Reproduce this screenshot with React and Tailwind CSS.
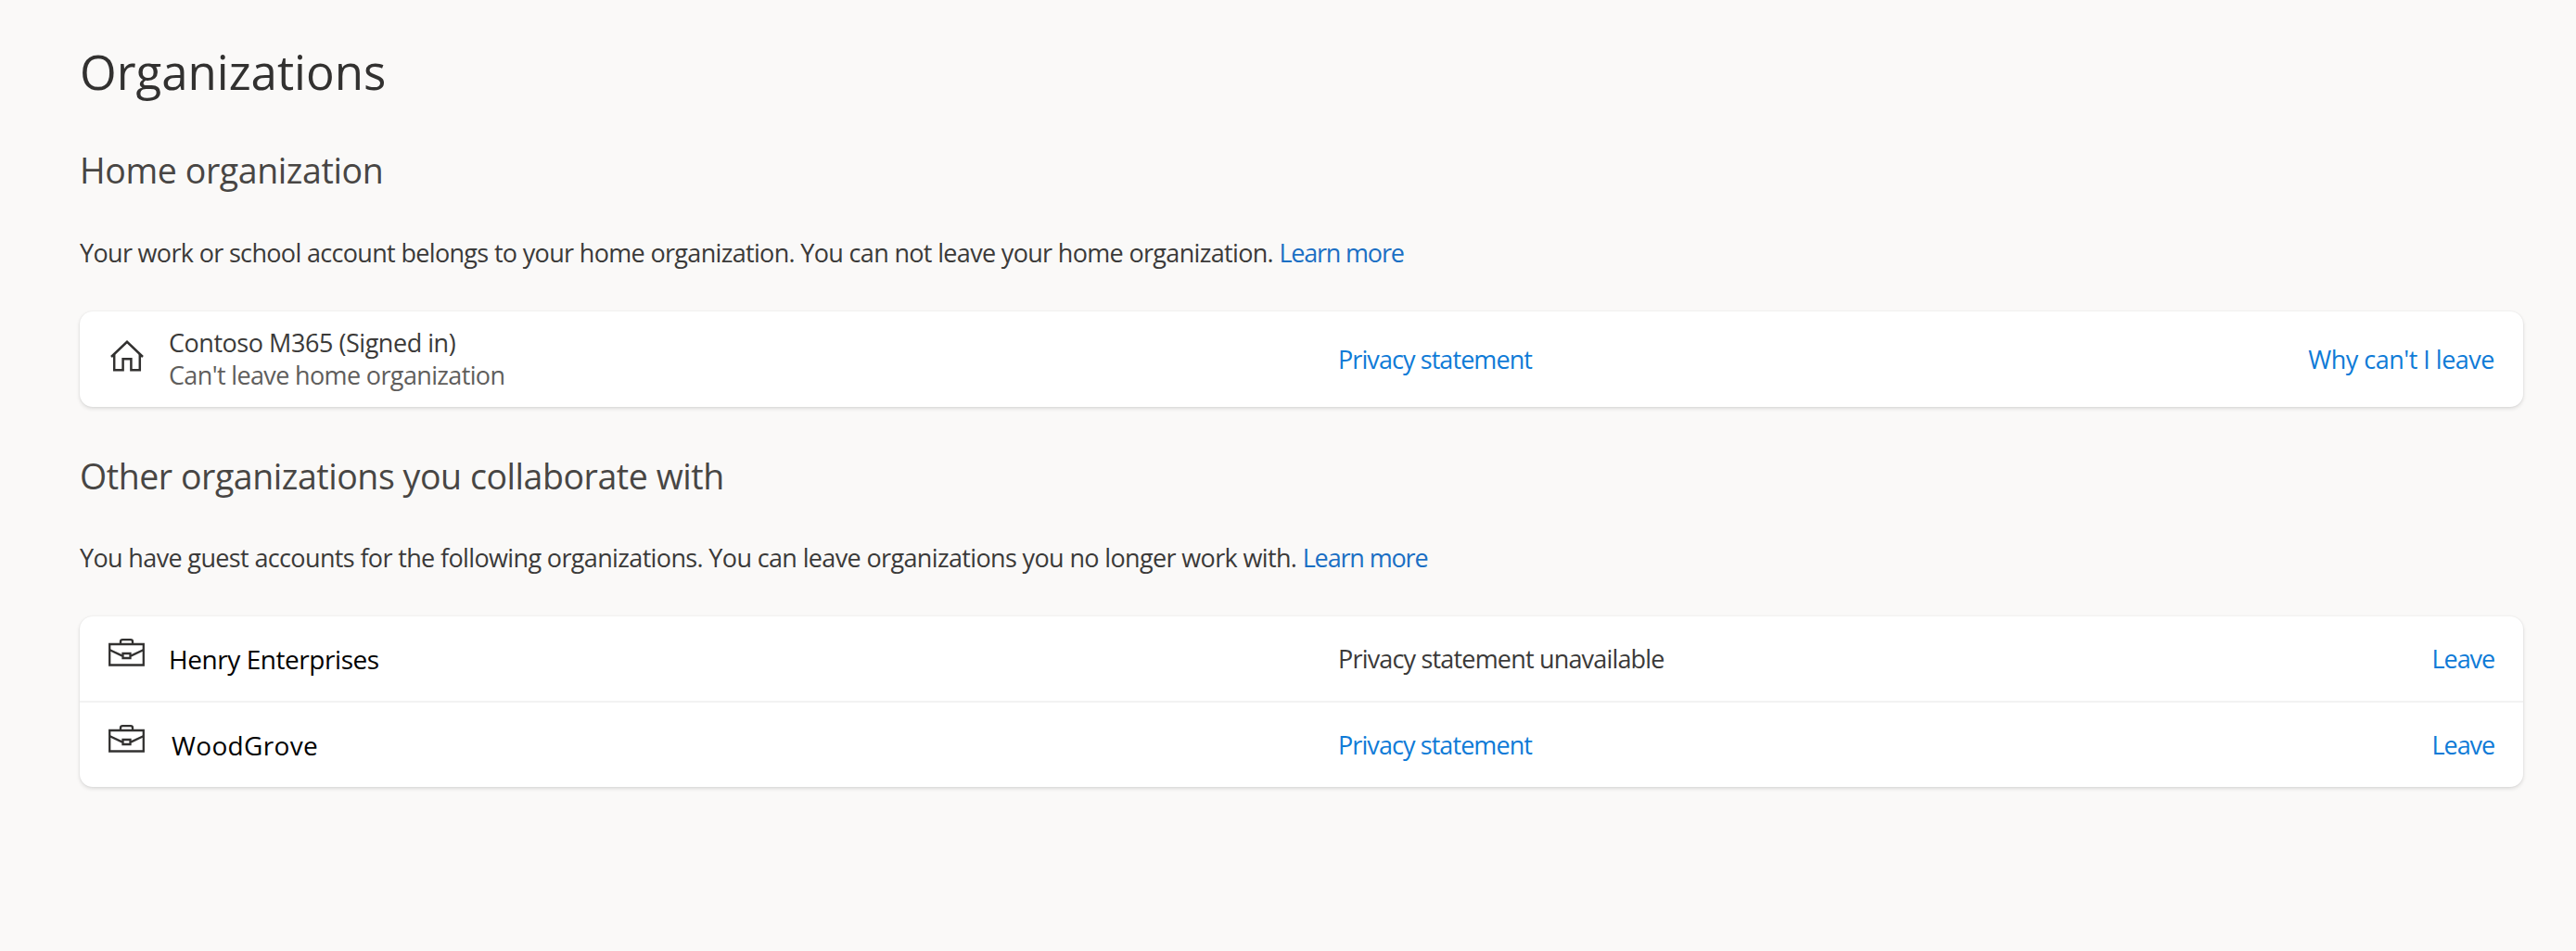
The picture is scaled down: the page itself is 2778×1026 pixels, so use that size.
import React from 'react';

function HomeIcon() {
  return (
    <svg viewBox="0 0 36 34" className="mb-[8px] ml-[33px] h-[34px] w-[36px]" fill="none" stroke="#323130" strokeWidth="2.5">
      <path d="M1 18 18 1.8 35 18" />
      <path d="M4.2 15.3V32.3H13.6V20.3H22.4V32.3H31.8V15.3" />
    </svg>
  );
}

function BriefcaseIcon() {
  return (
    <svg viewBox="0 0 39 30" className="mb-[14px] ml-[31px] h-[30px] w-[39px]" fill="none" stroke="#323130" strokeWidth="2.3">
      <path d="M1.2 6h36.6v22.5H1.2z" />
      <path d="M13 6V3.2Q13 1.2 15.2 1.2H23.8Q26 1.2 26 3.2V6" />
      <path d="M1.5 12.2 15 18.6M37.5 12.2 24 18.6" />
      <path d="M15.5 16h8v5h-8z" />
    </svg>
  );
}

const row = 'grid grid-cols-[96px_1261px_1fr_auto] items-center pr-[31px]';
const card = 'overflow-hidden rounded-[14px] bg-white shadow-[0_2px_4px_rgba(0,0,0,0.12),0_0_2px_rgba(0,0,0,0.08)]';
const h2 = 'text-[37.5px] leading-[50px] text-[#484644]';
const link = 'text-[#0f7bd7]';

function Privacy() {
  return <a className={`${link} tracking-[-0.92px]`}>Privacy statement</a>;
}

function Leave() {
  return <a className={`${link} tracking-[-1.1px]`}>Leave</a>;
}

export default function App() {
  return (
    <main className="flex h-[1026px] w-[2778px] flex-col bg-[#faf9f8] pt-[47px] pr-[57px] pl-[86px] font-['Open_Sans',sans-serif] text-[27px] leading-[36px] text-[#3b3a39]">
      <h1 className="text-[51px] leading-[60px] text-[#323130]">Organizations</h1>

      <h2 className={`${h2} mt-[52px] tracking-[-0.4px]`}>Home organization</h2>
      <p className="mt-[46px] tracking-[-0.67px]">
        Your work or school account belongs to your home organization. You can not leave your home organization.{' '}
        <a className="tracking-[-1.2px] text-[#1a6fc4]">Learn more</a>
      </p>
      <section className={`${card} ${row} mt-[45px] h-[103px]`}>
        <HomeIcon />
        <div className="pb-px leading-[35px]">
          <div className="tracking-[-0.46px]">Contoso M365 (Signed in)</div>
          <div className="tracking-[-0.64px] text-[#605e5c]">Can't leave home organization</div>
        </div>
        <Privacy />
        <a className={`${link} tracking-[-0.5px]`}>Why can't I leave</a>
      </section>

      <h2 className={`${h2} mt-[50px] tracking-[-0.45px]`}>Other organizations you collaborate with</h2>
      <p className="mt-[45px] tracking-[-0.64px]">
        You have guest accounts for the following organizations. You can leave organizations you no longer work with.{' '}
        <a className="tracking-[-1.15px] text-[#1a6fc4]">Learn more</a>
      </p>
      <section className={`${card} mt-[45px]`}>
        <div className={`${row} h-[91px]`}>
          <BriefcaseIcon />
          <span className="text-[28px] tracking-[-0.44px] text-black">Henry Enterprises</span>
          <span className="tracking-[-0.82px]">Privacy statement unavailable</span>
          <Leave />
        </div>
        <div className={`${row} h-[93px] border-t-2 border-[#f2f2f2]`}>
          <BriefcaseIcon />
          <span className="pl-[3px] text-[28px] tracking-[0.35px] text-black">WoodGrove</span>
          <Privacy />
          <Leave />
        </div>
      </section>
    </main>
  );
}
